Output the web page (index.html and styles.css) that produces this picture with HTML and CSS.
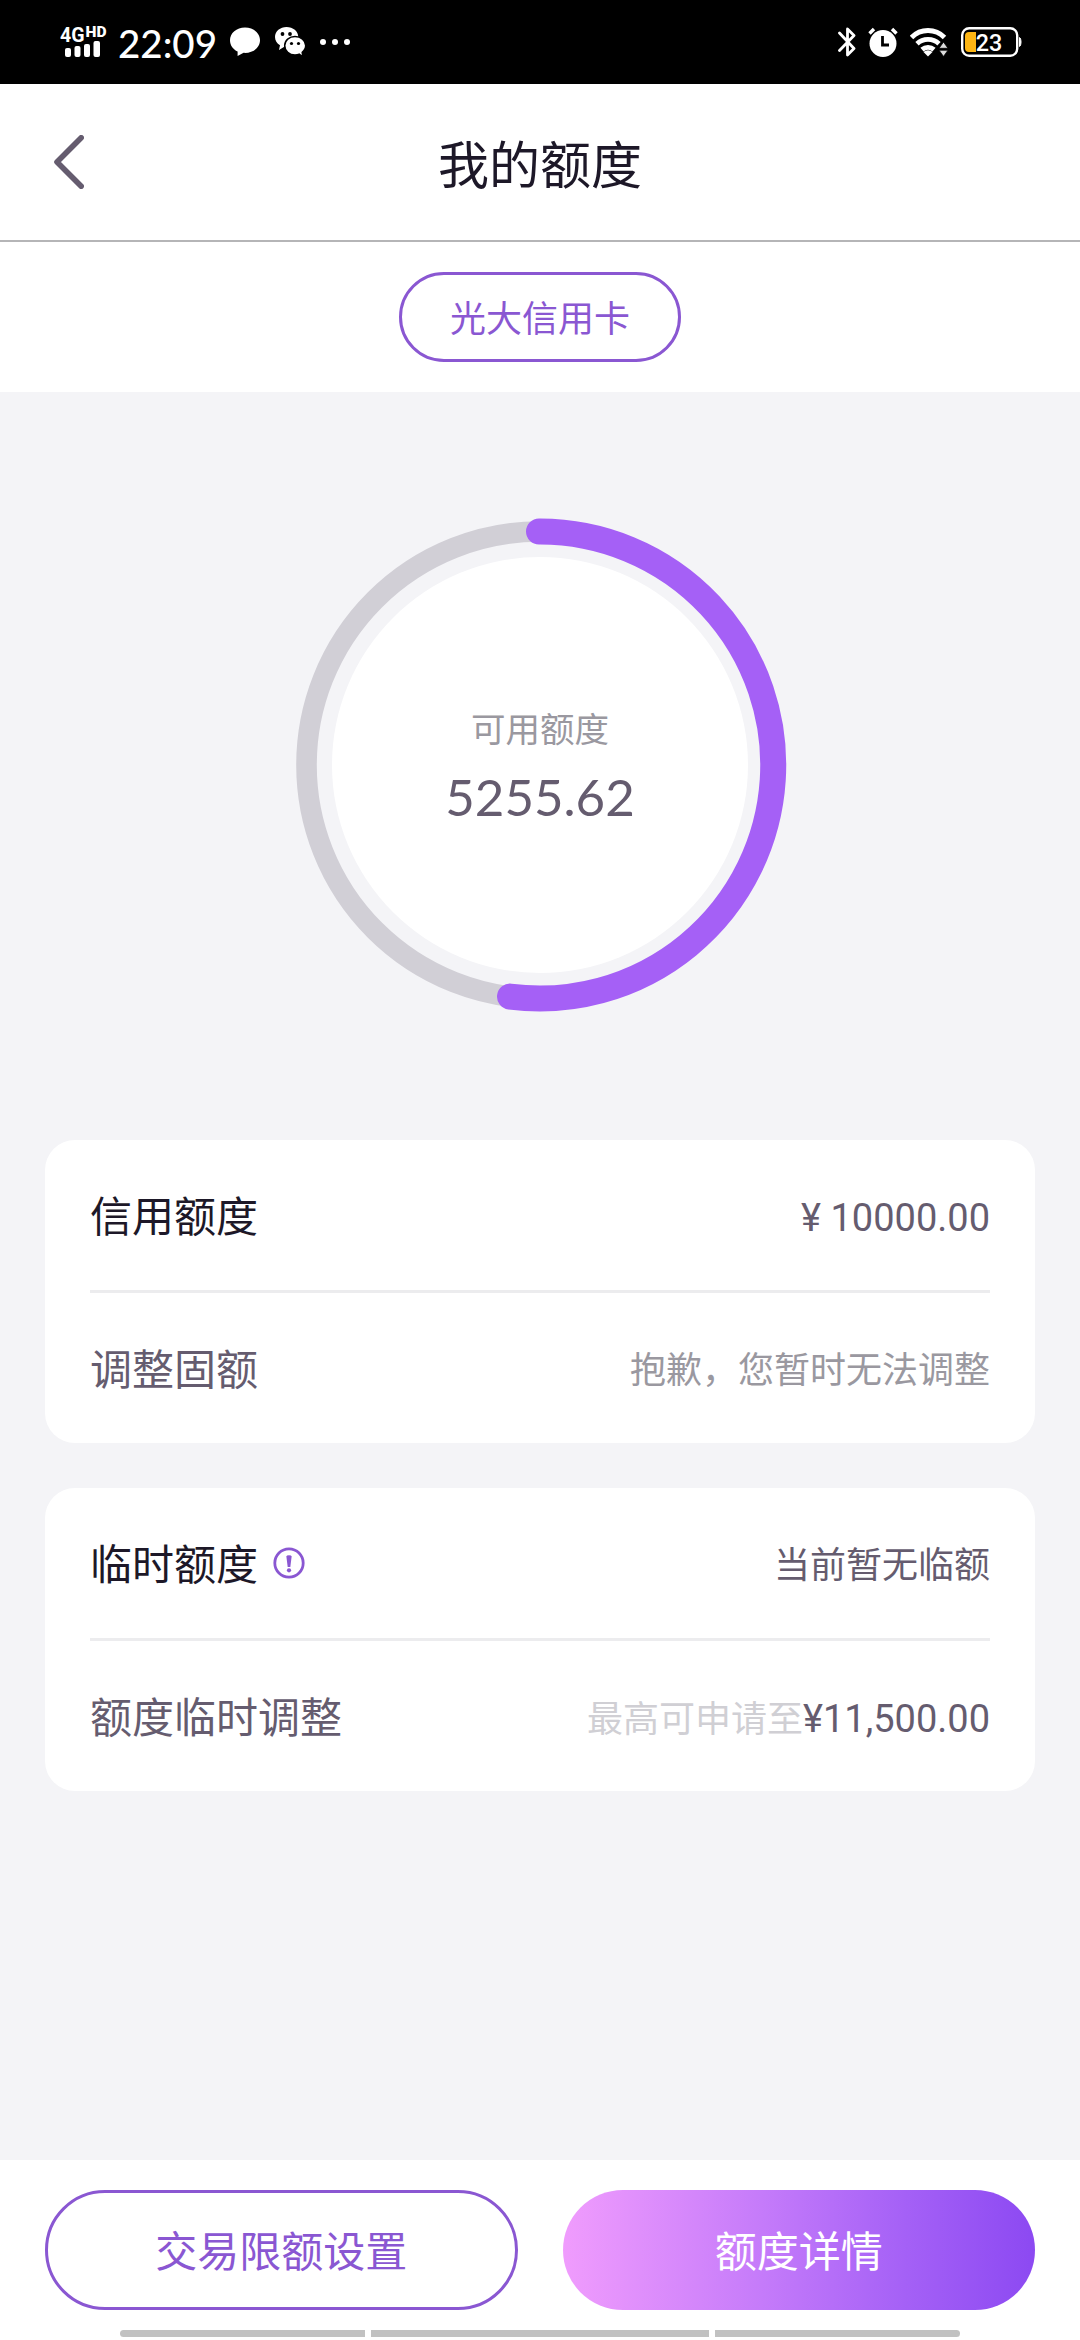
FILE: index.html
```
<!DOCTYPE html>
<html lang="zh-CN">
<head>
<meta charset="utf-8">
<title>我的额度</title>
<link rel="stylesheet" href="styles.css">
</head>
<body>
<div class="screen">
  <div class="status">
    <div class="status-left">
      <svg class="signal" width="50" height="48" viewBox="0 -8 50 48" fill="#fff">
        <text class="net" x="0" y="15.500" textLength="24.500" lengthAdjust="spacingAndGlyphs">4G</text>
        <text class="net-hd" x="25.500" y="10.800" textLength="21" lengthAdjust="spacingAndGlyphs">HD</text>
        <rect x="5" y="22" width="6" height="9" rx="2"/>
        <rect x="14.500" y="20" width="6" height="11" rx="2"/>
        <rect x="24" y="18" width="6" height="13" rx="2"/>
        <rect x="33.500" y="15" width="6.500" height="16" rx="2"/>
      </svg>
      <span class="time">22:09</span>
      <svg class="chat" width="30" height="30" viewBox="0 0 30 30" fill="#fff">
        <path d="M15 0.500C6.500 0.500 0 6 0 13.300c0 5 3 9.200 7.600 11.300V29l6-3.200c.5 0 1 .1 1.400.1 8.500 0 15-5.500 15-12.600S23.500.5 15 .5z"/>
      </svg>
      <svg class="wechat" width="31" height="31" viewBox="0 0 31 31">
        <path fill="#fff" d="M11.500 0C5.200 0 0 4.300 0 10c0 3.600 1.900 6.500 5 8.300L4 23l5.300-3.200c8.500 1.200 14-4 14-9.800C23.300 4.300 18 0 11.500 0z"/>
        <circle cx="7.500" cy="7" r="1.900"/><circle cx="15" cy="7" r="1.900"/>
        <path fill="#fff" stroke="#000" stroke-width="1.500" d="M20 9.500c-5.800 0-10.300 4-10.300 9.100S14.200 28 20 28c1.500 0 2.900-.2 4.200-.8l3.600 2.600-.6-4.500c2.100-1.600 3.500-4 3.500-6.700 0-5.100-4.900-9.100-10.700-9.100z"/>
        <circle cx="16.500" cy="16.500" r="1.600"/><circle cx="23.500" cy="16.500" r="1.600"/>
      </svg>
      <svg width="30" height="6" viewBox="0 0 30 6" fill="#fff"><circle cx="3" cy="3" r="3"/><circle cx="15" cy="3" r="3"/><circle cx="27" cy="3" r="3"/></svg>
    </div>
    <div class="status-right">
      <svg class="bt" width="18" height="30" viewBox="0 0 18 30" fill="none" stroke="#fff" stroke-width="2.800" stroke-linejoin="round" stroke-linecap="round"><path d="M1.500 6L16 21.500 9.500 28V2L16 8.500 1.500 23.500"/></svg>
      <svg class="alarm" width="30" height="30" viewBox="0 0 30 30">
        <circle cx="15" cy="16.500" r="13.500" fill="#fff"/>
        <path d="M1.500 6.500L6 2M28.500 6.500L24 2" stroke="#fff" stroke-width="3.400" fill="none"/>
        <path d="M14.500 9v9h6.500" stroke="#000" stroke-width="2.800" fill="none"/>
      </svg>
      <svg class="wifi" width="38" height="29" viewBox="0 0 38 29">
        <g fill="none" stroke="#fff" stroke-width="4.800"><path d="M1.500 9.500a23 23 0 0 1 33 0"/><path d="M7 15.800a16 16 0 0 1 22 0"/><path d="M12 21.600a9 9 0 0 1 12 0"/></g>
        <path d="M18 28.500l-4.500-4.400a6.500 6.500 0 0 1 9 0z" fill="#fff"/>
        <path d="M33.500 14l4.500 6.300h-9zM33.500 28.500l4.500-6.300h-9z" fill="#ddd" stroke="#000" stroke-width=".8"/>
      </svg>
      <svg class="battery" width="61" height="30" viewBox="0 0 61 30">
        <rect x="1.200" y="1.200" width="55" height="27.600" rx="7" fill="none" stroke="#fff" stroke-width="2.400"/>
        <path d="M8 5h7v20H8a4 4 0 0 1-4-4V9a4 4 0 0 1 4-4z" fill="#fcb514"/>
        <path d="M58.500 10.500c2 .8 2 8.200 0 9z" fill="#fff" stroke="#fff"/>
        <text class="pct" x="14.800" y="23.600" textLength="26.500" lengthAdjust="spacingAndGlyphs">23</text>
      </svg>
    </div>
  </div>

  <header class="header">
    <svg class="back" width="30" height="54" viewBox="0 0 30 54"><path d="M27.200 2.800L3 27l24.200 24.200" fill="none" stroke="#655c6f" stroke-width="5.600" stroke-linecap="round" stroke-linejoin="round"/></svg>
    <h1 class="title">我的额度</h1>
  </header>

  <div class="tabs"><span class="pill">光大信用卡</span></div>

  <main class="content">
    <section class="gauge">
      <svg class="ring" width="494" height="494" viewBox="0 0 494 494">
        <circle cx="247" cy="247" r="208" fill="#fff"/>
        <circle cx="247" cy="247" r="233.500" fill="none" stroke="#d1cfd6" stroke-width="20.600"/>
        <path d="M246 13.500H247A233.500 233.500 0 1 1 217 478.600" fill="none" stroke="#a560f6" stroke-width="26" stroke-linecap="round"/>
      </svg>
      <div class="gauge-text">
        <div class="gauge-label">可用额度</div>
        <div class="gauge-value">5255.62</div>
      </div>
    </section>

    <section class="card">
      <div class="row">
        <span class="name strong">信用额度</span>
        <span class="value figure"><span class="amount">¥ 10000.00</span></span>
      </div>
      <div class="row">
        <span class="name">调整固额</span>
        <span class="value muted">抱歉，您暂时无法调整</span>
      </div>
    </section>

    <section class="card">
      <div class="row">
        <span class="name strong">临时额度</span>
        <svg class="info" width="32" height="32" viewBox="0 0 32 32"><circle cx="16" cy="16" r="14.200" fill="none" stroke="#8a57d2" stroke-width="2.800"/><path d="M13.400 9.500q0-1.200 2.600-1.200t2.600 1.200L17.300 20h-2.600z" fill="#8a57d2"/><circle cx="16" cy="23.300" r="2.100" fill="#8a57d2"/></svg>
        <span class="value">当前暂无临额</span>
      </div>
      <div class="row">
        <span class="name">额度临时调整</span>
        <span class="value figure"><span class="faint">最高可申请至</span><span class="amount">¥11,500.00</span></span>
      </div>
    </section>
  </main>

  <footer class="footer">
    <div class="buttons">
      <span class="btn outline">交易限额设置</span>
      <span class="btn filled">额度详情</span>
    </div>
    <div class="navbar"><i class="seg first"></i><i class="seg mid"></i><i class="seg last"></i></div>
  </footer>
</div>
</body>
</html>
```
FILE: styles.css
```
* { box-sizing: border-box; }
body { margin: 0; }
.screen {
  width: 1080px;
  height: 2340px;
  display: flex;
  flex-direction: column;
  overflow: hidden;
  background: #fff;
  color: #655c6f;
  font-family: "Noto Sans CJK SC", sans-serif;
}

.status {
  height: 84px;
  padding: 0 58px 0 60px;
  background: #000;
  display: flex;
  justify-content: space-between;
  align-items: center;
}
.status-left, .status-right { display: flex; align-items: center; }
.net { font: 700 20px Roboto, sans-serif; }
.net-hd { font: 900 14px Roboto, sans-serif; }
.time {
  width: 99px;
  margin: 2px 13px 0 8px;
  font: 500 38.500px/44px Lato, sans-serif;
  color: #fff;
  white-space: nowrap;
}
.chat { margin-right: 15px; }
.wechat { margin-right: 14px; }
.bt { margin-right: 12px; }
.alarm { margin-right: 12px; }
.wifi { margin-right: 13px; }
.pct { font: 500 23.500px Roboto, sans-serif; fill: #fff; }

.header {
  height: 158px;
  padding: 0 54px;
  border-bottom: 2px solid #b5b5b7;
  display: grid;
  grid-template-columns: 30px 1fr 30px;
  align-items: center;
}
.title {
  margin: 0;
  padding-bottom: 1px;
  text-align: center;
  font-size: 51px;
  font-weight: 400;
  line-height: 60px;
  color: #1d1828;
}

.tabs {
  height: 150px;
  display: flex;
  justify-content: center;
  align-items: center;
}
.pill {
  width: 282px;
  height: 90px;
  border: 3px solid #8a57d2;
  border-radius: 45px;
  text-align: center;
  font-size: 36px;
  line-height: 83px;
  color: #8a57d2;
}

.content {
  flex: 1;
  padding: 126px 45px 0;
  background: #f4f4f7;
  display: flex;
  flex-direction: column;
}
.gauge {
  display: grid;
  justify-items: center;
  margin-bottom: 128px;
}
.ring, .gauge-text { grid-area: 1 / 1; }
.ring { display: block; }
.gauge-text { text-align: center; padding-top: 184px; }
.gauge-label { font-size: 34.500px; line-height: 50px; color: #9a98a0; }
.gauge-value { margin-top: 15px; font: 400 51px/60px Lato, sans-serif; }

.card {
  height: 303px;
  margin-bottom: 45px;
  padding: 0 45px;
  border-radius: 30px;
  background: #fff;
}
.row { height: 150px; padding-bottom: 2px; display: flex; align-items: center; }
.row + .row { height: 153px; border-top: 3px solid #ececee; }
.name { font-size: 42px; line-height: 60px; }
.strong { color: #1d1828; }
.value { margin-left: auto; font-size: 36px; line-height: 54px; }
.figure { padding-top: 5px; }
.amount { font: 400 38px/54px Roboto, sans-serif; }
.muted { color: #9a98a0; }
.faint { color: #d0cfd4; }
.info { margin: 1px 0 0 15px; }

.footer { height: 180px; padding-top: 30px; background: #fff; }
.buttons {
  padding: 0 45px;
  display: grid;
  grid-template-columns: 1fr 1fr;
  gap: 45px;
}
.btn {
  height: 120px;
  border-radius: 60px;
  text-align: center;
  font-size: 42px;
}
.outline { border: 3px solid #8a57d2; line-height: 112px; color: #8a57d2; }
.filled {
  line-height: 118px;
  color: #fff;
  background: linear-gradient(90deg, #f09cfd 0%, #c57bfa 42%, #a561f6 72%, #8c49f2 100%);
}
.navbar { margin-top: 20px; display: flex; justify-content: center; gap: 6px; }
.seg { height: 7px; background: #c1c1c1; }
.first { width: 245px; border-radius: 4px 0 0 4px; }
.mid { width: 338px; }
.last { width: 245px; border-radius: 0 4px 4px 0; }
```
